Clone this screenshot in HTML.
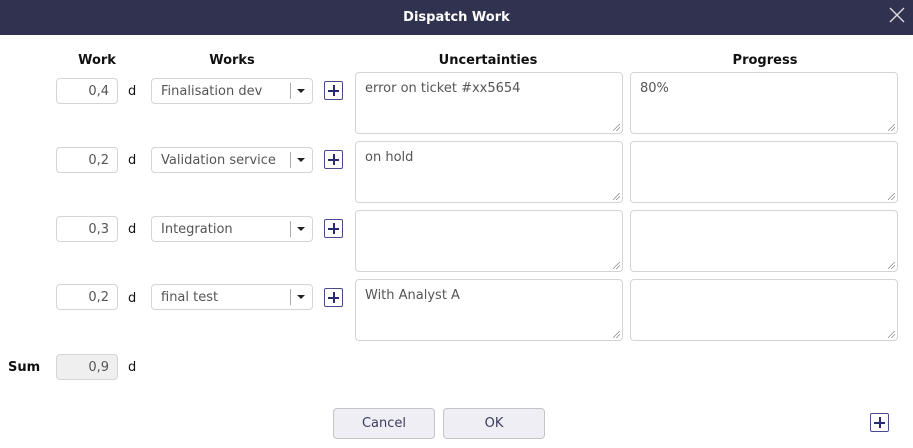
<!DOCTYPE html>
<html><head><meta charset="utf-8"><style>
*{box-sizing:border-box;margin:0;padding:0}
body{width:913px;height:448px;background:#fff;font-family:"DejaVu Sans","Liberation Sans",sans-serif;font-size:13px;color:#555;position:relative;overflow:hidden}
.a{position:absolute}
.hdr{left:0;top:0;width:913px;height:35px;background:#313150;color:#fff;font-weight:bold;text-align:center;line-height:36px;font-size:13px}
.h{top:53px;font-weight:bold;color:#111;font-size:13px;text-align:center}
.inp{width:62px;height:26px;border:1px solid #d4d4d4;border-radius:4px;text-align:right;padding-right:8px;line-height:26px;color:#555}
.d{color:#111;font-size:13px}
.sel{width:162px;height:26px;border:1px solid #d4d4d4;border-radius:4px;padding-left:9px;line-height:26px;color:#555}
.sel:after{content:"";position:absolute;left:138px;top:4px;width:1px;height:16px;background:#aaa}
.sel:before{content:"";position:absolute;left:145px;top:10px;border-left:4px solid transparent;border-right:4px solid transparent;border-top:4px solid #222}
.pl{width:19px;height:19px;border:1px solid #4a4a8a;border-radius:2px}
.pl:before{content:"";position:absolute;left:3px;top:8px;width:11px;height:2px;background:#2a2a70}
.pl:after{content:"";position:absolute;left:8px;top:3px;width:2px;height:11px;background:#2a2a70}
.ta{height:62px;border:1px solid #d4d4d4;border-radius:4px;padding:8px 9px;color:#555}
.ta:after{content:"";position:absolute;right:2px;bottom:2px;width:7px;height:7px;background:linear-gradient(135deg,transparent 45%,#888 46%,#888 52%,transparent 53%,transparent 70%,#888 71%,#888 77%,transparent 78%)}
.btn{top:408px;width:102px;height:31px;border:1px solid #c4c4c8;border-radius:4px;background:#eeeef4;text-align:center;line-height:30px;color:#3c3c5c}
</style></head><body>
<div class="a hdr">Dispatch Work</div>
<svg class="a" style="left:889px;top:7px" width="16" height="16"><path d="M1 1L15 15M15 1L1 15" stroke="#ddd" stroke-width="1.4"/></svg>
<div class="a h" style="left:67px;width:60px">Work</div>
<div class="a h" style="left:192px;width:80px">Works</div>
<div class="a h" style="left:400px;width:176px">Uncertainties</div>
<div class="a h" style="left:700px;width:130px">Progress</div>

<div class="a inp" style="left:56px;top:78px">0,4</div><div class="a d" style="left:128px;top:84px">d</div>
<div class="a sel" style="left:151px;top:78px">Finalisation dev</div><div class="a pl" style="left:324px;top:81px"></div>
<div class="a ta" style="left:355px;top:72px;width:268px">error on ticket #xx5654</div>
<div class="a ta" style="left:630px;top:72px;width:268px">80%</div>

<div class="a inp" style="left:56px;top:147px">0,2</div><div class="a d" style="left:128px;top:153px">d</div>
<div class="a sel" style="left:151px;top:147px">Validation service</div><div class="a pl" style="left:324px;top:150px"></div>
<div class="a ta" style="left:355px;top:141px;width:268px">on hold</div>
<div class="a ta" style="left:630px;top:141px;width:268px"></div>

<div class="a inp" style="left:56px;top:216px">0,3</div><div class="a d" style="left:128px;top:222px">d</div>
<div class="a sel" style="left:151px;top:216px">Integration</div><div class="a pl" style="left:324px;top:219px"></div>
<div class="a ta" style="left:355px;top:210px;width:268px"></div>
<div class="a ta" style="left:630px;top:210px;width:268px"></div>

<div class="a inp" style="left:56px;top:284px">0,2</div><div class="a d" style="left:128px;top:291px">d</div>
<div class="a sel" style="left:151px;top:284px">final test</div><div class="a pl" style="left:324px;top:288px"></div>
<div class="a ta" style="left:355px;top:279px;width:268px">With Analyst A</div>
<div class="a ta" style="left:630px;top:279px;width:268px"></div>

<div class="a" style="left:8px;top:360px;font-weight:bold;color:#111">Sum</div>
<div class="a inp" style="left:56px;top:354px;background:#efefef">0,9</div><div class="a d" style="left:128px;top:360px">d</div>

<div class="a btn" style="left:333px">Cancel</div>
<div class="a btn" style="left:443px">OK</div>
<div class="a pl" style="left:870px;top:413px"></div>
</body></html>
